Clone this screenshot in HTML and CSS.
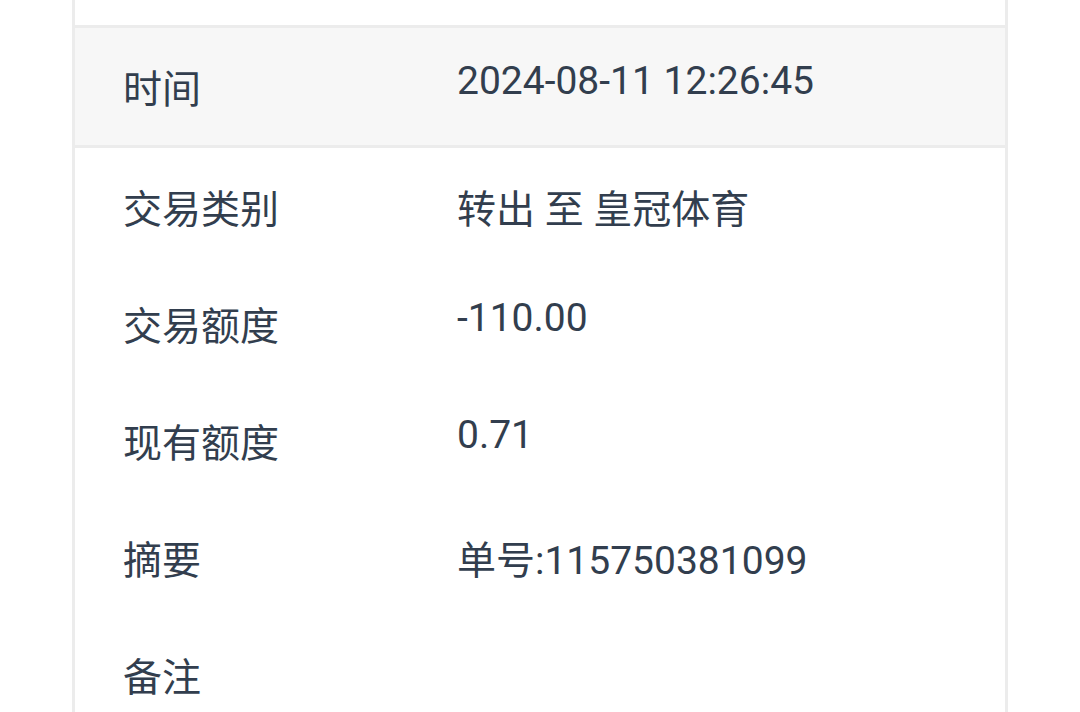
FILE: index.html
```html
<!DOCTYPE html>
<html lang="zh-CN">

<head>
  <meta charset="UTF-8">
  <meta name="viewport" content="width=device-width, initial-scale=1.0">
  <title>交易详情</title>
  <link rel="stylesheet" href="styles.css">
</head>

<body>
  <div class="detail-card">
    <div class="card-top"></div>

    <div class="detail-row detail-head">
      <div class="detail-label">时间</div>
      <div class="detail-value">2024-08-11 12:26:45</div>
    </div>

    <div class="detail-row">
      <div class="detail-label">交易类别</div>
      <div class="detail-value">转出 至 皇冠体育</div>
    </div>
    <div class="detail-row">
      <div class="detail-label">交易额度</div>
      <div class="detail-value">-110.00</div>
    </div>
    <div class="detail-row">
      <div class="detail-label">现有额度</div>
      <div class="detail-value">0.71</div>
    </div>
    <div class="detail-row">
      <div class="detail-label">摘要</div>
      <div class="detail-value">单号:115750381099</div>
    </div>
    <div class="detail-row">
      <div class="detail-label">备注</div>
      <div class="detail-value"></div>
    </div>
  </div>
</body>

</html>
```

FILE: styles.css
```css
body {
  margin: 0;
  background-color: #fff;
  font-family: Roboto, "Noto Sans CJK SC", sans-serif;
  color: #323e4e;
  overflow: hidden;
}

.detail-card {
  margin: 0 72px;
  border-left: 3px solid #ececec;
  border-right: 3px solid #ececec;
  min-height: 712px;
}

.card-top {
  height: 25px;
  border-bottom: 3px solid #ececec;
}

.detail-row {
  display: grid;
  grid-template-columns: 334px 1fr;
  align-items: start;
  height: 117px;
  box-sizing: border-box;
  padding: 30px 0 0 48px;
  font-size: 39px;
}

.detail-head {
  height: 120px;
  background-color: #f7f7f7;
  border-bottom: 3px solid #ececec;
}

.detail-label,
.detail-value {
  white-space: nowrap;
}
```
